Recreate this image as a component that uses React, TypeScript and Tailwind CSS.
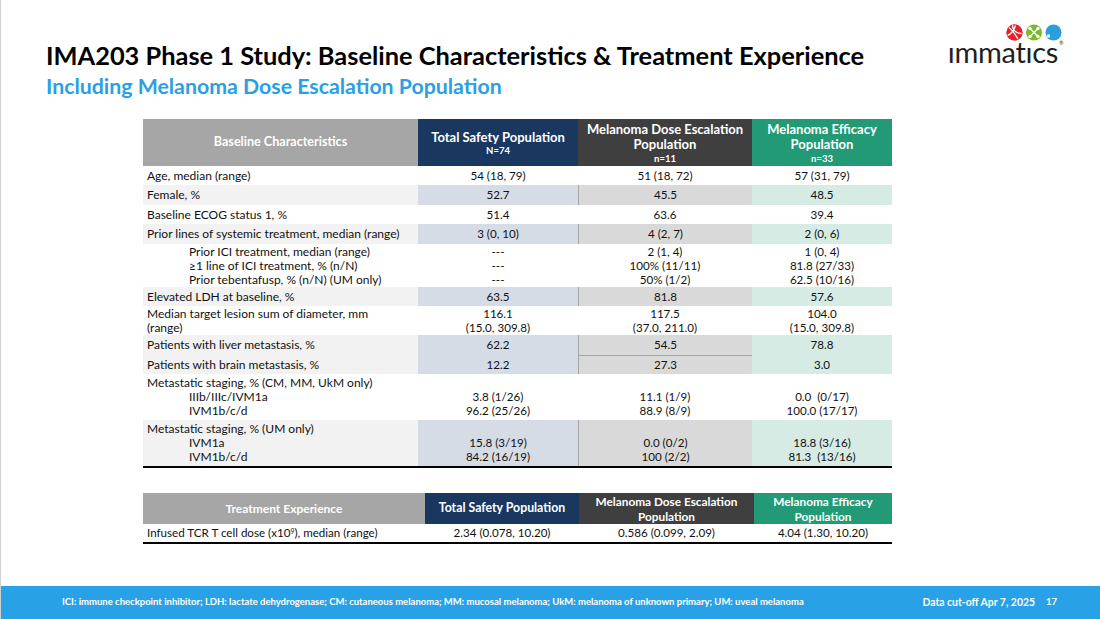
import React from "react";

type RowSpec = {
  label: { text: React.ReactNode; indent?: boolean }[];
  vals: [string[], string[], string[]];
  shaded?: boolean;
  h: number;
  splitCol3?: boolean;
};

const rows: RowSpec[] = [
  { label: [{ text: "Age, median (range)" }], vals: [["54 (18, 79)"], ["51 (18, 72)"], ["57 (31, 79)"]], h: 19 },
  { label: [{ text: "Female, %" }], vals: [["52.7"], ["45.5"], ["48.5"]], shaded: true, h: 20 },
  { label: [{ text: "Baseline ECOG status 1, %" }], vals: [["51.4"], ["63.6"], ["39.4"]], h: 19 },
  {
    label: [{ text: "Prior lines of systemic treatment, median (range)" }],
    vals: [["3 (0, 10)"], ["4 (2, 7)"], ["2 (0, 6)"]],
    shaded: true,
    h: 20,
  },
  {
    label: [
      { text: "Prior ICI treatment, median (range)", indent: true },
      { text: "≥1 line of ICI treatment, % (n/N)", indent: true },
      { text: "Prior tebentafusp, % (n/N) (UM only)", indent: true },
    ],
    vals: [
      ["---", "---", "---"],
      ["2 (1, 4)", "100% (11/11)", "50% (1/2)"],
      ["1 (0, 4)", "81.8 (27/33)", "62.5 (10/16)"],
    ],
    h: 43,
  },
  { label: [{ text: "Elevated LDH at baseline, %" }], vals: [["63.5"], ["81.8"], ["57.6"]], shaded: true, h: 19 },
  {
    label: [{ text: "Median target lesion sum of diameter, mm" }, { text: "(range)" }],
    vals: [
      ["116.1", "(15.0, 309.8)"],
      ["117.5", "(37.0, 211.0)"],
      ["104.0", "(15.0, 309.8)"],
    ],
    h: 29,
  },
  { label: [{ text: "Patients with liver metastasis, %" }], vals: [["62.2"], ["54.5"], ["78.8"]], shaded: true, h: 20 },
  {
    label: [{ text: "Patients with brain metastasis, %" }],
    vals: [["12.2"], ["27.3"], ["3.0"]],
    shaded: true,
    splitCol3: true,
    h: 19,
  },
  {
    label: [
      { text: "Metastatic staging, % (CM, MM, UkM only)" },
      { text: "IIIb/IIIc/IVM1a", indent: true },
      { text: "IVM1b/c/d", indent: true },
    ],
    vals: [
      ["", "3.8 (1/26)", "96.2 (25/26)"],
      ["", "11.1 (1/9)", "88.9 (8/9)"],
      ["", "0.0  (0/17)", "100.0 (17/17)"],
    ],
    h: 46,
  },
  {
    label: [
      { text: "Metastatic staging, % (UM only)" },
      { text: "IVM1a", indent: true },
      { text: "IVM1b/c/d", indent: true },
    ],
    vals: [
      ["", "15.8 (3/19)", "84.2 (16/19)"],
      ["", "0.0 (0/2)", "100 (2/2)"],
      ["", "18.8 (3/16)", "81.3  (13/16)"],
    ],
    shaded: true,
    h: 46,
  },
];

const Lines = ({ lines }: { lines: string[] }) => (
  <>
    {lines.map((l, i) => (
      <div key={i} className="h-[14px] leading-[14px] whitespace-pre">
        {l}
      </div>
    ))}
  </>
);

function BodyRow({ row }: { row: RowSpec }) {
  const s = row.shaded;
  return (
    <div className="grid grid-cols-[275px_160px_174px_140px]" style={{ height: row.h }}>
      <div className={`flex flex-col justify-center pl-[4px] text-[12px] ${s ? "bg-[#f2f2f2]" : ""}`}>
        {row.label.map((l, i) => (
          <div key={i} className={`h-[14px] leading-[14px] whitespace-nowrap ${l.indent ? "pl-[42px]" : ""}`}>
            {l.text}
          </div>
        ))}
      </div>
      <div className={`flex flex-col items-center justify-center ${s ? "bg-[#d6dce5]" : ""}`}>
        <Lines lines={row.vals[0]} />
      </div>
      <div
        className={`flex flex-col items-center justify-center ${s ? "border-l border-[#a6a6a6] bg-[#d9d9d9]" : ""} ${
          row.splitCol3 ? "border-t border-t-[#a6a6a6]" : ""
        }`}
      >
        <Lines lines={row.vals[1]} />
      </div>
      <div className={`flex flex-col items-center justify-center ${s ? "bg-[#d5ebe3]" : ""}`}>
        <Lines lines={row.vals[2]} />
      </div>
    </div>
  );
}

function Logo() {
  return (
    <div className="flex flex-col items-end">
      <svg width="56" height="17" viewBox="0 0 56 17" className="mr-[1px]">
        <circle cx="8.5" cy="8.5" r="8.2" fill="#e2222b" />
        <path
          d="M3 3.5 C7 6.5 9.5 11 12 15 M6.5 1 C6.5 6 9.5 9 15.5 9.5 M1.5 11.5 C5 10 8 6.5 9.5 1.5"
          stroke="#fff"
          strokeWidth="1.3"
          fill="none"
        />
        <circle cx="28" cy="8.5" r="8" fill="#7ab929" />
        <path d="M24 4.5 L28 8.5 L32 4.5 M24 12.5 L28 8.5 L32 12.5" stroke="#fff" strokeWidth="1.4" fill="none" />
        <circle cx="24" cy="4.5" r="1.7" fill="#fff" />
        <circle cx="32" cy="4.5" r="1.7" fill="#fff" />
        <circle cx="24" cy="12.5" r="1.7" fill="#fff" />
        <circle cx="32" cy="12.5" r="1.7" fill="#fff" />
        <circle cx="47.5" cy="8.5" r="8" fill="#2a9fe0" />
        <circle cx="42.5" cy="12" r="1.7" fill="#fff" />
      </svg>
      <div className="relative -mt-[4px] mr-[5px] text-[29px] leading-[30px] tracking-[-0.3px] text-[#231f20]">
        ımmatıcs
        <span className="absolute -right-[5px] top-[4px] text-[5px] leading-none">®</span>
      </div>
    </div>
  );
}

export default function App() {
  return (
    <div
      className="flex h-[619px] w-[1100px] flex-col overflow-hidden border-l border-[#cfcfcf] bg-white text-black"
      style={{ fontFamily: "Lato, 'Open Sans', sans-serif" }}
    >
      <div className="flex justify-between pl-[45px] pr-[37px] pt-[40px]">
        <div>
          <h1 className="text-[25.4px] font-bold leading-[31px] text-black">
            IMA203 Phase 1 Study: Baseline Characteristics &amp; Treatment Experience
          </h1>
          <h2 className="mt-[3px] text-[21.3px] font-bold leading-[25px] text-[#2a9fe3]">
            Including Melanoma Dose Escalation Population
          </h2>
        </div>
        <div className="-mt-[16px]">
          <Logo />
        </div>
      </div>

      <div className="ml-[142px] mt-[20px] w-[749px] text-[11.6px] text-[#111]">
        <div className="grid h-[47px] grid-cols-[275px_160px_174px_140px] font-bold text-white">
          <div className="flex items-center justify-center bg-[#a6a6a6] text-[12.6px]">Baseline Characteristics</div>
          <div className="flex flex-col items-center justify-center bg-[#1a3760] leading-[15px]">
            <span className="text-[13px]">Total Safety Population</span>
            <span className="text-[9.5px] leading-[11px]">N=74</span>
          </div>
          <div className="flex flex-col items-center justify-center bg-[#3f3f3f] text-center leading-[15.5px]">
            <span className="text-[13px]">Melanoma Dose Escalation</span>
            <span className="text-[13px]">Population</span>
            <span className="text-[9.5px] leading-[11px]">n=11</span>
          </div>
          <div className="flex flex-col items-center justify-center bg-[#219a75] text-center leading-[15.5px]">
            <span className="text-[13px]">Melanoma Efficacy</span>
            <span className="text-[13px]">Population</span>
            <span className="text-[9.5px] leading-[11px]">n=33</span>
          </div>
        </div>
        {rows.map((r, i) => (
          <BodyRow key={i} row={r} />
        ))}
        <div className="h-[2px] bg-black" />

        <div className="mt-[25px] grid h-[31px] grid-cols-[282px_154px_175px_138px] font-bold text-white">
          <div className="flex items-center justify-center bg-[#a6a6a6] text-[12px]">Treatment Experience</div>
          <div className="flex items-center justify-center bg-[#1a3760] text-[12.3px]">Total Safety Population</div>
          <div className="flex flex-col items-center justify-center bg-[#3f3f3f] text-[11.8px] leading-[15px]">
            <span>Melanoma Dose Escalation</span>
            <span>Population</span>
          </div>
          <div className="flex flex-col items-center justify-center bg-[#219a75] text-[11.8px] leading-[15px]">
            <span>Melanoma Efficacy</span>
            <span>Population</span>
          </div>
        </div>
        <div className="grid h-[18px] grid-cols-[282px_154px_175px_138px] items-center">
          <div className="pl-[4px]">
            Infused TCR T cell dose (x10<sup className="text-[7px]">9</sup>), median (range)
          </div>
          <div className="text-center">2.34 (0.078, 10.20)</div>
          <div className="text-center">0.586 (0.099, 2.09)</div>
          <div className="text-center">4.04 (1.30, 10.20)</div>
        </div>
        <div className="h-[2px] bg-black" />
      </div>

      <div className="mt-auto flex h-[33px] items-center bg-[#29a1e6] pl-[61px] pr-[43px] font-bold text-white">
        <span className="text-[9.5px]">
          ICI: immune checkpoint inhibitor; LDH: lactate dehydrogenase; CM: cutaneous melanoma; MM: mucosal melanoma;
          UkM: melanoma of unknown primary; UM: uveal melanoma
        </span>
        <span className="ml-auto text-[10.4px]">Data cut-off Apr 7, 2025</span>
        <span className="ml-[11px] text-[9.5px]">17</span>
      </div>
    </div>
  );
}
